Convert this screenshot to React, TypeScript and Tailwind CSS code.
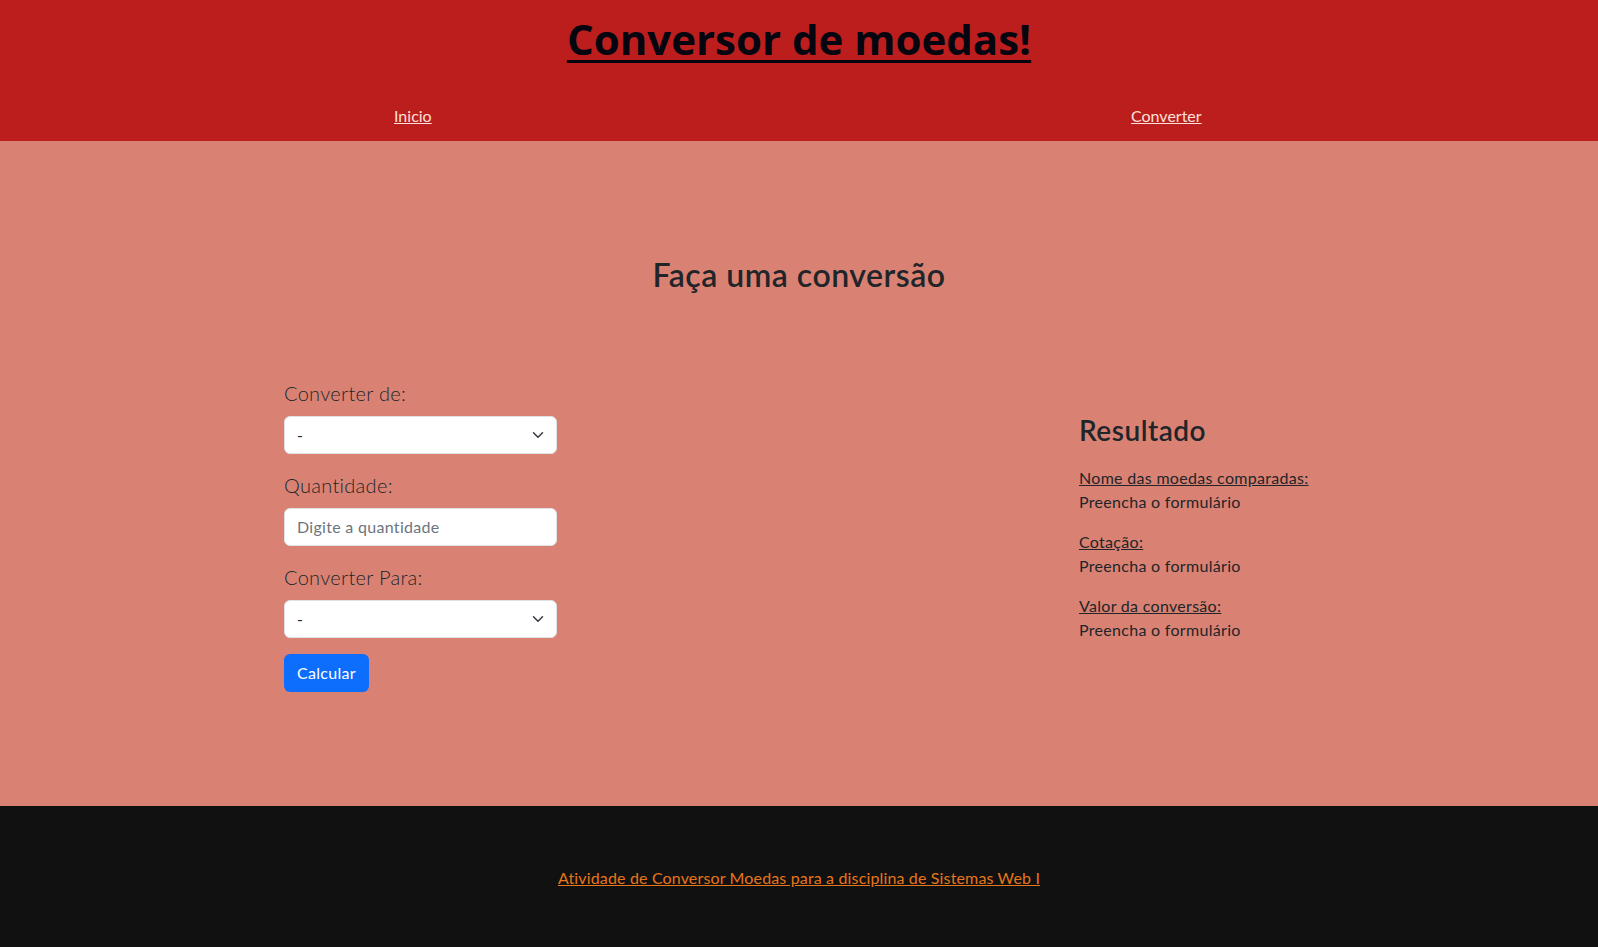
import React from "react";

const font = { fontFamily: "Lato, 'Noto Sans', sans-serif" };

function Chevron() {
  return (
    <svg width="12" height="12" viewBox="0 0 16 16" className="pointer-events-none absolute right-[12px] top-1/2 -translate-y-1/2">
      <path d="M2 5l6 6 6-6" fill="none" stroke="#343a40" strokeWidth="2" strokeLinecap="round" strokeLinejoin="round" />
    </svg>
  );
}

function SelectBox() {
  return (
    <div className="relative w-[273px] h-[38px] bg-white border border-[#dee2e6] rounded-[6px] flex items-center pl-[12px] text-[16px] text-[#212529]">
      -
      <Chevron />
    </div>
  );
}

export default function App() {
  return (
    <div style={font} className="w-full min-h-screen text-[#212529] tracking-[0.3px]">
      <header className="bg-[#bc1e1e] pt-[15px] pb-[13px]">
        <h1 className="text-center text-[42px] leading-[48px] font-bold text-[#050510] tracking-normal font-['Open_Sans',sans-serif]">
          <a href="#" className="underline decoration-[3px] underline-offset-[5px]">Conversor de moedas!</a>
        </h1>
        <nav className="mt-[41px] flex text-[16px] leading-[24px] tracking-normal">
          <div className="pl-[394px] w-[1131px]">
            <a href="#" className="underline text-[#fbe1d9]">Inicio</a>
          </div>
          <a href="#" className="underline text-[#fbe1d9]">Converter</a>
        </nav>
      </header>

      <main className="bg-[#d98274] pt-[115px] pb-[114px]">
        <h2 className="text-center text-[32px] leading-[38px] font-semibold text-[#212529] tracking-[0.5px]">Faça uma conversão</h2>
        <div className="mt-[84px] flex items-center">
          <div className="ml-[284px] w-[273px]">
            <label className="block text-[20px] leading-[30px] font-light mb-[8px]">Converter de:</label>
            <SelectBox />
            <label className="block text-[20px] leading-[30px] font-light mt-[16px] mb-[8px]">Quantidade:</label>
            <div className="w-[273px] h-[38px] bg-white border border-[#dee2e6] rounded-[6px] flex items-center pl-[12px] text-[16px] text-[#6c757d]">
              Digite a quantidade
            </div>
            <label className="block text-[20px] leading-[30px] font-light mt-[16px] mb-[8px]">Converter Para:</label>
            <SelectBox />
            <button className="mt-[16px] h-[38px] px-[13px] bg-[#0d6efd] text-white rounded-[6px] text-[16px]">Calcular</button>
          </div>
          <div className="ml-[522px] text-[16px] leading-[24px]">
            <h3 className="text-[28px] leading-[34px] font-semibold mb-[19px] tracking-[0.5px]">Resultado</h3>
            <p className="underline">Nome das moedas comparadas:</p>
            <p className="mb-[16px]">Preencha o formulário</p>
            <p className="underline">Cotação:</p>
            <p className="mb-[16px]">Preencha o formulário</p>
            <p className="underline">Valor da conversão:</p>
            <p className="mb-[16px]">Preencha o formulário</p>
          </div>
        </div>
      </main>

      <footer className="bg-[#111111] pt-[60px] pb-[58px] text-center text-[16px] leading-[24px] tracking-[0.15px]">
        <a href="#" className="underline text-[#e5761b]">Atividade de Conversor Moedas para a disciplina de Sistemas Web I</a>
      </footer>
    </div>
  );
}
